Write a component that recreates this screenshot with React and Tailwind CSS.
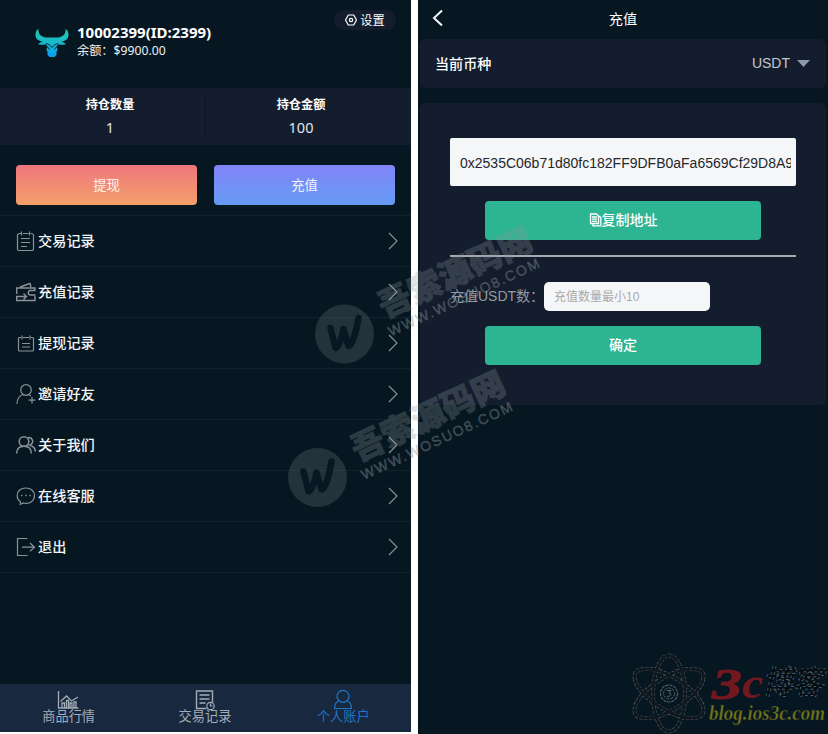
import React from "react";

const line = {
  fill: "none",
  stroke: "currentColor",
  strokeWidth: 1.2,
};

function Bull() {
  return (
    <svg width="34" height="30" viewBox="0 0 34 30" className="shrink-0">
      <defs>
        <linearGradient id="bull" x1="0" y1="0" x2="0" y2="1">
          <stop offset="0" stopColor="#20cdb0" />
          <stop offset="0.5" stopColor="#17b9c8" />
          <stop offset="1" stopColor="#0a9cf4" />
        </linearGradient>
      </defs>
      <path
        fill="url(#bull)"
        d="M3.500 0.500 C-0.500 4 -0.500 9.500 3 12 C4.500 13 6 13.300 7.500 13.300 L3 16 C6 17.300 9 17 11 16 L12.300 19.500 L11.300 21.500 L12.500 24 L12.500 27 L14.500 29 H19.500 L21.500 27 L21.500 24 L22.700 21.500 L21.700 19.500 L23 16 C25 17 28 17.300 31 16 L26.500 13.300 C28 13.300 29.500 13 31 12 C34.500 9.500 34.500 4 30.500 0.500 C31.300 5 29 8.500 23 9.500 H11 C5 8.500 2.700 5 3.500 0.500 Z"
      />
      <path
        d="M11 15.500 C13.500 16 15.500 17.500 17 19.500 C18.500 17.500 20.500 16 23 15.500 M11.800 18 L14.500 21.500 M22.200 18 L19.500 21.500"
        fill="none"
        stroke="#06202e"
        strokeWidth="0.900"
      />
    </svg>
  );
}

const icons = {
  trade: (
    <g {...line}>
      <path d="M5 2.500 H3.500 A2 2 0 0 0 1.500 4.500 V18 A1.500 1.500 0 0 0 3 19.500 H16 A1.500 1.500 0 0 0 17.500 18 V4.500 A2 2 0 0 0 15.500 2.500 H14.500 M7 2.500 H12.500 M5.500 0.500 V4.500 M13.500 0.500 V4.500 M5 7.500 H14 M5 11.500 H14 M5 15.500 H11" />
    </g>
  ),
  recharge: (
    <g {...line} strokeWidth="1.400">
      <path d="M0.700 12 V6 H19 V8 M19 14 V18.500 H0.700 V14.500 H10 M4 5 L14 1.500 L15 5 M19.500 8.500 H14 A2.300 2.300 0 0 0 14 13 H19.500 M7.500 11.500 L10.500 14.500 L7.500 17.500" />
    </g>
  ),
  withdraw: (
    <g {...line}>
      <path d="M5 4.500 H3.500 A1 1 0 0 0 2.500 5.500 V17 A1 1 0 0 0 3.500 18 H16.500 A1 1 0 0 0 17.500 17 V5.500 A1 1 0 0 0 16.500 4.500 H15 M7 4.500 H13 M6 2.500 V6.500 M14 2.500 V6.500 M6 10.500 H14 M6 14 H14" />
    </g>
  ),
  invite: (
    <g {...line}>
      <circle cx="10" cy="6" r="5.300" />
      <path d="M1 20 C1 15 3.500 11.500 7.500 10.500 M12.500 10.500 L15 12 M16 13 V19.500 M12.700 16.200 H19.300" />
    </g>
  ),
  about: (
    <g {...line} strokeWidth="1.500">
      <circle cx="8" cy="6.500" r="4.800" />
      <path d="M0.700 18.500 C0.700 14 3.500 11.300 8 11.300 C12.500 11.300 15.300 14 15.300 18.500 M12 2.700 C16 2 18 6.500 15.500 9 C14.500 10 13.500 10.300 12.500 10.300 M14.500 10.500 C17.500 11.500 19.300 14 19.300 16.500" />
    </g>
  ),
  service: (
    <g {...line}>
      <path d="M4.500 15.800 L4.300 18.300 L7.500 17 C14 18.500 18.500 14.500 18.500 9.500 C18.500 5 14.700 2 9.800 2 C4.900 2 1.200 5 1.200 9.500 C1.200 12.200 2.500 14.500 4.500 15.800 Z" />
      <path d="M5 9.500 H6.400 M9.200 9.500 H10.600 M13.400 9.500 H14.800" strokeWidth="1.600" />
    </g>
  ),
  exit: (
    <g {...line}>
      <path d="M11.500 1.500 H1.500 V18.500 H11.500 M6 10.200 H18.500 M14 6 L18.500 10.200 L14 14.400" />
    </g>
  ),
};

const menu = [
  ["trade", "交易记录"],
  ["recharge", "充值记录"],
  ["withdraw", "提现记录"],
  ["invite", "邀请好友"],
  ["about", "关于我们"],
  ["service", "在线客服"],
  ["exit", "退出"],
];

function MenuRow({ icon, label }) {
  return (
    <div className="flex h-[51px] items-center border-b border-[#12212c] pl-4 pr-[13px]">
      <svg width="20" height="20" viewBox="0 0 20 20" className="shrink-0 text-[#8b9196]">
        {icons[icon]}
      </svg>
      <span className="ml-0.5 flex-1 text-[14.200px] font-medium text-[#f3f5f7]">{label}</span>
      <svg width="10" height="18" viewBox="0 0 10 18" className="text-[#8b9499]">
        <path d="M1 1 L9 9 L1 17" {...line} strokeWidth="1.100" />
      </svg>
    </div>
  );
}

function Stat({ label, value }) {
  return (
    <div className="flex flex-1 flex-col items-center pt-[7px]">
      <span className="text-[12.200px] font-bold leading-5">{label}</span>
      <span className="mt-px text-[14.500px] leading-[22px] text-[#e2e5ea]">{value}</span>
    </div>
  );
}

function Tab({ label, active, children, offset }) {
  return (
    <div
      className={
        "flex flex-1 flex-col items-center pt-[5px] " +
        (active ? "pl-[3px] text-[#1f74c8]" : "pl-px text-[#a3acb8]")
      }
    >
      <svg width="22" height="21" viewBox="0 0 22 21" className={"shrink-0 " + offset}>
        {children}
      </svg>
      <span className="-mt-0.5 text-[13.200px] leading-[17px]">{label}</span>
    </div>
  );
}

function AccountScreen() {
  return (
    <section className="flex h-[732px] w-[411px] flex-col bg-[#061722] font-['Noto_Sans','Noto_Sans_CJK_SC',sans-serif] text-white">
      <header className="flex h-[88px] items-start pl-[35px] pr-[15px]">
        <div className="mt-[28px]">
          <Bull />
        </div>
        <div className="ml-2 mt-[23px] flex flex-1 flex-col whitespace-nowrap">
          <span className="text-[15px] font-bold leading-[18px]">10002399(ID:2399)</span>
          <span className="text-[12.200px] leading-[20px] text-[#eef1f3]">余额：$9900.00</span>
        </div>
        <div className="mt-2.5 flex h-5 w-[62px] items-center justify-center gap-[3px] rounded-full bg-[#131d2e]">
          <svg width="12" height="12" viewBox="0 0 12 12">
            <path d="M3.300 1 H8.700 L11.500 6 L8.700 11 H3.300 L0.500 6 Z" {...line} strokeLinejoin="round" />
            <circle cx="6" cy="6" r="1.700" {...line} />
          </svg>
          <span className="pt-px text-[12.200px] leading-5">设置</span>
        </div>
      </header>

      <div className="flex h-[57px] bg-[#131d2e] pr-[15px]">
        <div className="flex w-[205px] shrink-0 pl-[15px]">
          <Stat label="持仓数量" value="1" />
        </div>
        <div className="my-2 w-px bg-[#0b1624]" />
        <Stat label="持仓金额" value="100" />
      </div>

      <div className="flex h-[71px] gap-[17px] border-b border-[#12212c] px-4 pt-5">
        <button className="h-10 flex-1 rounded bg-linear-to-b from-[#ef757d] to-[#f3a069] pt-0.5 text-[13.300px] text-[#fff1ec]">
          提现
        </button>
        <button className="h-10 flex-1 rounded bg-linear-to-b from-[#8184f7] to-[#649af5] pt-0.5 text-[13.300px] text-[#f0f3ff]">
          充值
        </button>
      </div>

      <div className="flex-1">
        {menu.map(([icon, label]) => (
          <MenuRow key={icon} icon={icon} label={label} />
        ))}
      </div>

      <nav className="flex h-[48px] bg-[#18283f]">
        <Tab label="商品行情" offset="-ml-0.5">
          <path d="M1.500 2 V19 H21.500 M3.500 12.500 L9.500 7 L14.500 12 L21 8" {...line} strokeWidth="1.300" />
          <path d="M5 19 V14 H7.500 V19 M9.500 19 V11.500 H11.500 V19 M13 19 V14 H15 V19 M17 19 V13 H19 V19" {...line} strokeWidth="1.300" />
        </Tab>
        <Tab label="交易记录" offset="ml-px">
          <path d="M12.500 19.500 H2.500 V2 H18.500 V13.500 M5.500 6 H15.500 M5.500 10 H15.500 M5.500 14 H11.500" {...line} strokeWidth="1.400" />
          <circle cx="16.500" cy="17" r="3.700" {...line} />
          <path d="M16.500 14.500 V17 H18.500" {...line} />
        </Tab>
        <Tab label="个人账户" offset="" active>
          <circle cx="11" cy="7.300" r="6" {...line} />
          <path d="M6.800 12 C4 13 2.500 15.500 2.500 19.500 H19.500 C19.500 15.500 18 13 15.200 12" {...line} />
        </Tab>
      </nav>
    </section>
  );
}

function DepositScreen() {
  return (
    <section className="flex h-[734px] w-[410px] flex-col bg-[#061722] pl-0.5 pr-0.5 font-['Liberation_Sans','Noto_Sans_CJK_SC',sans-serif] text-white">
      <header className="flex h-[39px] items-center">
        <svg width="12" height="18" viewBox="0 0 12 18" className="-mt-1 ml-3 shrink-0">
          <path d="M10 1.500 L2 9 L10 16.500" fill="none" stroke="#f5f7f8" strokeWidth="2" />
        </svg>
        <h1 className="mr-6 flex-1 text-center text-[14.200px]">充值</h1>
      </header>

      <div className="flex h-[49px] items-center rounded-md bg-[#131d2e] pl-[15px] pr-4">
        <span className="flex-1 pt-0.5 text-[14.100px] font-medium">当前币种</span>
        <span className="text-[14px] text-[#c3c8d0]">USDT</span>
        <svg width="13" height="7" viewBox="0 0 13 7" className="ml-[7px]">
          <path d="M0 0 H13 L6.500 7 Z" fill="#8e99aa" />
        </svg>
      </div>

      <div className="mt-[15px] flex h-[302px] flex-col rounded-md bg-[#131d2e] pl-[30px] pr-[30px] pt-[35px]">
        <div className="h-12 rounded-[2px] bg-[#f5f6f8] pl-2.5 pr-[5px]">
          <div className="overflow-hidden whitespace-nowrap text-[14px] leading-[50px] text-[#24272b]">
            0x2535C06b71d80fc182FF9DFB0aFa6569Cf29D8A9
          </div>
        </div>
        <button className="mx-[35px] mt-[15px] flex h-[39px] shrink-0 items-center justify-center rounded bg-[#2db493] text-[14px] font-medium">
          <svg width="13" height="14" viewBox="0 0 13 14" className="-mt-0.5">
            <path d="M2.500 1 H7.500 L9.500 3 V10.500 H1.500 V1 Z M3 4 H8 M3 6.200 H8 M3 8.400 H8 M10 3 L11.800 4.500 V12.800 H4 V11" {...line} strokeWidth="1.300" />
          </svg>
          复制地址
        </button>
        <div className="mt-[15px] h-0.5 shrink-0 bg-[#a7aaae]" />
        <div className="mt-[25px] flex h-[29px] shrink-0 items-center">
          <span className="w-[94px] shrink-0 whitespace-nowrap text-[14px] text-[#969ba2]">充值USDT数：</span>
          <div className="flex h-[29px] w-[166px] items-center rounded-[5px] bg-[#f5f6f8] pl-2.5 text-[12px] text-[#a9a9a9]">
            充值数量最小10
          </div>
        </div>
        <button className="mx-[35px] mt-[15px] h-[39px] shrink-0 rounded bg-[#2db493] text-[14px] font-medium">
          确定
        </button>
      </div>
    </section>
  );
}

function SiteMark({ x, y }) {
  return (
    <g transform={`translate(${x} ${y})`}>
      <circle r="29.500" fill="#8c9494" fillOpacity="0.220" />
      <path
        d="M-14 -6 L-9 14 C-6 14 -2 2 -1 -5 L4 12 C8 12 12 -4 14 -16"
        fill="none"
        stroke="#061722"
        strokeOpacity="0.950"
        strokeWidth="6.500"
        strokeLinecap="round"
        strokeLinejoin="round"
      />
      <g transform="rotate(-25)" fill="#929799">
        <g opacity="0.270">
          <text
            x="43"
            y="3"
            fontSize="33"
            fontWeight="900"
            textLength="166"
            lengthAdjust="spacingAndGlyphs"
            fontFamily="Noto Sans CJK SC, sans-serif"
            stroke="#929799"
            strokeWidth="0.900"
          >
            吾索源码网
          </text>
        </g>
        <text
          x="41"
          y="22"
          fontSize="14"
          textLength="165"
          fontFamily="Liberation Sans, Arial, sans-serif"
          fillOpacity="0.350"
          stroke="#929799"
          strokeWidth="0.600"
          strokeOpacity="0.300"
        >
          WWW.WOSUO8.COM
        </text>
      </g>
    </g>
  );
}

function Orbits() {
  const loop =
    "M0 -38 C9 -38 16 -20 16 0 C16 22 9 38 0 38 C-9 38 -16 22 -16 0 C-16 -20 -9 -38 0 -38 Z";
  const side =
    "M-34 -14 C-37 -26 -24 -25 -14 -24 C3 -19 16 -10 26 0 C32 8 34 11 34 14 C37 26 24 25 14 24 C-3 19 -16 10 -26 0 C-32 -8 -34 -11 -34 -14 Z";
  return (
    <g fill="none">
      <g stroke="#4c575f" strokeWidth="4" strokeDasharray="3 1.500">
        <path d={loop} />
        <path d={side} />
        <path d={side} transform="scale(-1 1)" />
      </g>
      <g stroke="#10181e" strokeWidth="2.800">
        <path d={loop} />
        <path d={side} />
        <path d={side} transform="scale(-1 1)" />
      </g>
      <circle r="8.500" stroke="#56616a" strokeWidth="1.200" strokeDasharray="3 1" />
      <circle r="5.500" stroke="#56616a" strokeWidth="1" strokeDasharray="3 1" />
      <path d="M-2 -3 H2 L0 -0.500 C3 -0.500 3 3 -2 3" stroke="#56616a" />
    </g>
  );
}

function BlogMark() {
  return (
    <>
      <g transform="translate(669 693.500)">
        <Orbits />
      </g>
      <g fontFamily="Liberation Serif, serif" fontStyle="italic" fontWeight="700">
        <text x="712" y="699" fontSize="45" fill="#741820" stroke="#741820" textLength="30" lengthAdjust="spacingAndGlyphs">
          3
        </text>
        <text x="742" y="698" fontSize="45" fill="#741820" textLength="21" lengthAdjust="spacingAndGlyphs">
          c
        </text>
        <text
          x="762"
          y="694"
          fontSize="33"
          fontFamily="Noto Sans CJK SC, sans-serif"
          fontWeight="500"
          fill="#030b13"
          stroke="#66717a"
          strokeWidth="0.700"
          strokeDasharray="3 3"
          textLength="61"
          lengthAdjust="spacingAndGlyphs"
        >
          博客
        </text>
        <text
          x="709"
          y="720"
          fontSize="20"
          fill="#74791f"
          stroke="#171e1e"
          strokeWidth="0.500"
          textLength="116"
          lengthAdjust="spacingAndGlyphs"
        >
          blog.ios3c.com
        </text>
      </g>
    </>
  );
}

function Watermarks() {
  return (
    <svg
      width="828"
      height="734"
      viewBox="0 0 828 734"
      className="pointer-events-none absolute left-0 top-0"
    >
      <SiteMark x={344.5} y={334} />
      <SiteMark x={317.5} y={477.5} />
      <BlogMark />
    </svg>
  );
}

export default function App() {
  return (
    <main className="relative flex h-[734px] w-[828px] justify-between overflow-hidden bg-white">
      <AccountScreen />
      <DepositScreen />
      <Watermarks />
    </main>
  );
}
